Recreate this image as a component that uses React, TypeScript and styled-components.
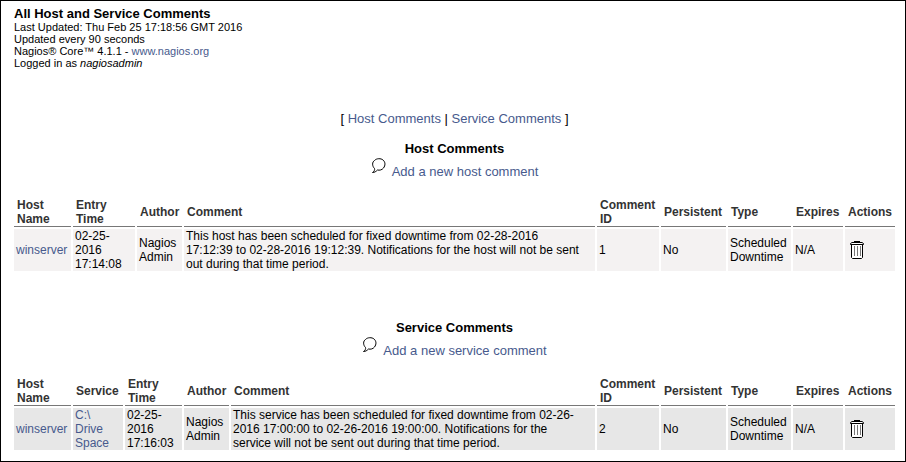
import React from 'react';
import styled, { createGlobalStyle } from 'styled-components';

const GlobalStyle = createGlobalStyle`
  * { box-sizing: border-box; }
  body {
    margin: 0;
    background: #fff;
    color: #000;
    font-family: "Liberation Sans", Arial, Helvetica, sans-serif;
    font-size: 12px;
    line-height: 14px;
  }
`;

const Page = styled.div`
  min-height: 100vh;
  border: 1px solid #000;
  padding: 5px 8px 8px 11px;
`;

const Info = styled.header`
  padding: 0 2px;
  font-size: 11px;
  line-height: 12px;
`;

const PageTitle = styled.h1`
  margin: 0;
  font-size: 13px;
  line-height: 15px;
`;

const Link = styled.a`
  color: #475a8d;
  text-decoration: none;
  &:hover { text-decoration: underline; }
`;

const JumpLinks = styled.nav`
  margin-top: 42px;
  text-align: center;
  font-size: 13px;
  line-height: 16px;
`;

const Section = styled.section<{ $gap: number }>`
  margin-top: ${(p) => p.$gap}px;
`;

const SectionTitle = styled.h2`
  margin: 0;
  text-align: center;
  font-size: 13px;
  line-height: 16px;
`;

const AddComment = styled.div`
  display: flex;
  justify-content: center;
  align-items: flex-start;
  gap: 5px;
  font-size: 13px;
  line-height: 30px;
`;

const Table = styled.table`
  width: 100%;
  margin-top: 9px;
  table-layout: fixed;
  border-collapse: separate;
  border-spacing: 2px;
`;

const Column = styled.col<{ $width?: number }>`
  width: ${(p) => (p.$width ? `${p.$width}px` : 'auto')};
`;

const HeadCell = styled.th`
  height: 29px;
  padding: 0 3px;
  border-bottom: 1px solid #777;
  color: #333;
  text-align: left;
  vertical-align: middle;
`;

const Cell = styled.td<{ $shade: string }>`
  height: 42px;
  padding: 0 2px;
  background: ${(p) => p.$shade};
  vertical-align: middle;
`;

const TextCell = styled(Cell)`
  padding-right: 8px;
`;

const DeleteButton = styled.button`
  display: block;
  margin: 0 0 0 2px;
  padding: 0;
  border: 0;
  background: none;
  cursor: pointer;
  svg { display: block; }
`;

const BubbleIcon = () => (
  <svg width="16" height="18" viewBox="0 0 16 18" fill="none" stroke="#000" aria-hidden="true">
    <path d="M3.5 11.5C1 9 1 5 3.500 3.500C5.500 1.200 10 1.200 12 3C14.500 5 14.500 8.500 12.500 11C11 13 8.500 13.500 6.500 13C5 14.500 3.500 15.500 1.500 15.500C3 14.500 4 13 3.500 11.500Z" />
  </svg>
);

const TrashIcon = () => (
  <svg width="16" height="20" viewBox="0 0 16 20" fill="none" stroke="#000" aria-hidden="true">
    <path d="M5 1.500H11" />
    <path d="M1.500 4.500V3.500L3 2.500H13L14.500 3.500V4.500Z" fill="#fff" />
    <path d="M2.500 5V17.500L3.500 18.500H12.500L13.500 17.500V5" fill="#fff" />
    <path d="M5.500 6V16M8.500 6V16M11.500 6V16" stroke="#777" />
  </svg>
);

type Kind = 'host' | 'service';

interface Comment {
  id: number;
  host: string;
  service?: string;
  time: string;
  text: string;
}

const tailColumns = [
  { label: 'Comment ID', width: 62 },
  { label: 'Persistent', width: 65 },
  { label: 'Type', width: 63 },
  { label: 'Expires', width: 50 },
  { label: 'Actions', width: 50 },
];

const columns: Record<Kind, { label: string; width?: number }[]> = {
  host: [
    { label: 'Host Name', width: 57 },
    { label: 'Entry Time', width: 62 },
    { label: 'Author', width: 45 },
    { label: 'Comment' },
    ...tailColumns,
  ],
  service: [
    { label: 'Host Name', width: 57 },
    { label: 'Service', width: 50 },
    { label: 'Entry Time', width: 57 },
    { label: 'Author', width: 45 },
    { label: 'Comment' },
    ...tailColumns,
  ],
};

const CommentSection = ({ kind, title, gap, shade, comment }: {
  kind: Kind; title: string; gap: number; shade: string; comment: Comment;
}) => (
  <Section id={`${kind}-comments`} $gap={gap}>
    <SectionTitle>{title}</SectionTitle>
    <AddComment>
      <BubbleIcon />
      <Link href={`#add-${kind}-comment`}>Add a new {kind} comment</Link>
    </AddComment>
    <Table aria-label={title}>
      <colgroup>
        {columns[kind].map((c) => <Column key={c.label} $width={c.width} />)}
      </colgroup>
      <thead>
        <tr>{columns[kind].map((c) => <HeadCell key={c.label} scope="col">{c.label}</HeadCell>)}</tr>
      </thead>
      <tbody>
        <tr>
          <Cell $shade={shade}><Link href="#winserver">{comment.host}</Link></Cell>
          {comment.service && <Cell $shade={shade}><Link href="#service">{comment.service}</Link></Cell>}
          <Cell $shade={shade}>{comment.time}</Cell>
          <Cell $shade={shade}>Nagios Admin</Cell>
          <TextCell $shade={shade}>{comment.text}</TextCell>
          <Cell $shade={shade}>{comment.id}</Cell>
          <Cell $shade={shade}>No</Cell>
          <Cell $shade={shade}>Scheduled Downtime</Cell>
          <Cell $shade={shade}>N/A</Cell>
          <Cell $shade={shade}>
            <DeleteButton type="button" aria-label="Delete this comment"><TrashIcon /></DeleteButton>
          </Cell>
        </tr>
      </tbody>
    </Table>
  </Section>
);

export default function App() {
  return (
    <>
      <GlobalStyle />
      <Page>
        <Info>
          <PageTitle>All Host and Service Comments</PageTitle>
          <div>Last Updated: Thu Feb 25 17:18:56 GMT 2016</div>
          <div>Updated every 90 seconds</div>
          <div>Nagios® Core™ 4.1.1 - <Link href="#nagios">www.nagios.org</Link></div>
          <div>Logged in as <i>nagiosadmin</i></div>
        </Info>
        <JumpLinks>
          [ <Link href="#host-comments">Host Comments</Link> | <Link href="#service-comments">Service Comments</Link> ]
        </JumpLinks>
        <CommentSection
          kind="host"
          title="Host Comments"
          gap={14}
          shade="#f4f2f2"
          comment={{
            id: 1,
            host: 'winserver',
            time: '02-25-2016 17:14:08',
            text: 'This host has been scheduled for fixed downtime from 02-28-2016 17:12:39 to 02-28-2016 19:12:39. Notifications for the host will not be sent out during that time period.',
          }}
        />
        <CommentSection
          kind="service"
          title="Service Comments"
          gap={47}
          shade="#e7e7e7"
          comment={{
            id: 2,
            host: 'winserver',
            service: 'C:\\ Drive Space',
            time: '02-25-2016 17:16:03',
            text: 'This service has been scheduled for fixed downtime from 02-26-2016 17:00:00 to 02-26-2016 19:00:00. Notifications for the service will not be sent out during that time period.',
          }}
        />
      </Page>
    </>
  );
}
